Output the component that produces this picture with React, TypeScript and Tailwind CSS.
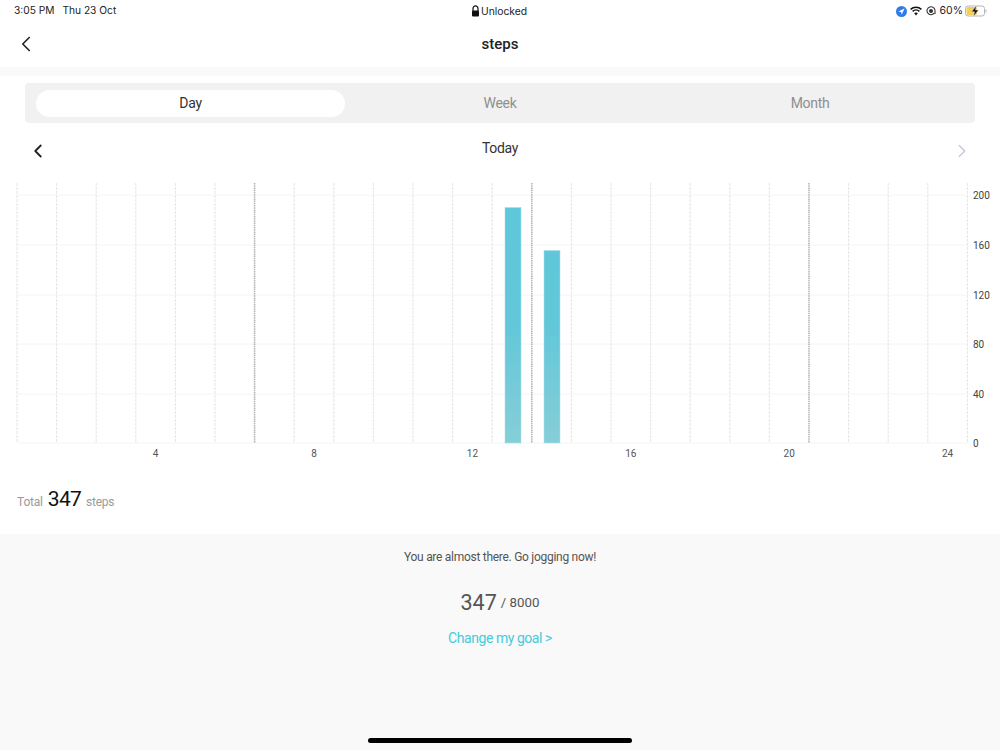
import { ChevronLeft, ChevronRight } from 'lucide-react'

const X0 = 17
const STEP = 39.6
const Y_TICKS = [
  { label: '200', y: 195 },
  { label: '160', y: 245 },
  { label: '120', y: 295 },
  { label: '80', y: 344 },
  { label: '40', y: 394 },
  { label: '0', y: 443 },
]
const X_TICKS = [4, 8, 12, 16, 20, 24]
const DARK_LINES = [6, 13, 20]
const BARS = [
  { x: 505, top: 207.5 },
  { x: 544, top: 250.5 },
]

function StepsChart() {
  return (
    <svg viewBox="0 0 1000 290" className="block h-[290px] w-full">
      <defs>
        <linearGradient id="bar-fill" gradientUnits="userSpaceOnUse" x1="0" x2="0" y1="34" y2="270">
          <stop offset="0%" stopColor="#5ec7da" />
          <stop offset="50%" stopColor="#62c7d9" />
          <stop offset="100%" stopColor="#86ced7" />
        </linearGradient>
      </defs>

      {/* horizontal grid */}
      {Y_TICKS.map((t) => (
        <line key={t.label} x1={X0} x2={968} y1={t.y - 173} y2={t.y - 173} stroke="#f4f4f4" strokeWidth={1} />
      ))}

      {/* vertical grid, a few drawn darker */}
      {Array.from({ length: 25 }).map((_, i) => {
        const x = X0 + i * STEP
        const dark = DARK_LINES.includes(i)
        return (
          <line
            key={i}
            x1={x}
            x2={x}
            y1={10}
            y2={270}
            stroke={dark ? '#b2b2b2' : '#e8e8e8'}
            strokeWidth={dark ? 1.5 : 1.2}
            strokeDasharray={dark ? '1.5 0.7' : '3 1'}
          />
        )
      })}

      {BARS.map((b) => (
        <rect
          key={b.x}
          x={b.x}
          y={b.top - 173}
          width={16}
          height={443 - b.top}
          fill="url(#bar-fill)"
          stroke="#a8e0ea"
          strokeWidth={0.5}
        />
      ))}

      {Y_TICKS.map((t) => (
        <text key={t.label} x={973} y={t.y - 169} fontSize="10" fill="#444" fontFamily="Roboto, sans-serif">
          {t.label}
        </text>
      ))}
      {X_TICKS.map((t) => (
        <text
          key={t}
          x={X0 + (t - 0.5) * STEP}
          y={283.5}
          textAnchor="middle"
          fontSize="10"
          fill="#555"
          fontFamily="Roboto, sans-serif"
        >
          {t}
        </text>
      ))}
    </svg>
  )
}

function StatusIcons() {
  return (
    <div className="flex items-center text-[10.5px] text-[#222]">
      <svg width="11" height="11" viewBox="0 0 11 11" className="mr-[3px]">
        <circle cx="5.5" cy="5.5" r="5.5" fill="#2f7bf0" />
        <path d="M8.6 2.4 L2.2 5.4 L5.1 5.9 L5.6 8.8 Z" fill="#fff" />
      </svg>
      <svg width="12" height="10" viewBox="0 0 12 10" className="mr-[4px]">
        <path d="M0.6 3.4a7.8 7.8 0 0 1 10.8 0" fill="none" stroke="#111" strokeWidth="1.5" />
        <path d="M2.6 5.4a5 5 0 0 1 6.8 0" fill="none" stroke="#111" strokeWidth="1.5" />
        <path d="M4.5 7.3a2.3 2.3 0 0 1 3 0L6 9.2z" fill="#111" stroke="#111" strokeWidth="0.5" />
      </svg>
      <svg width="10" height="10" viewBox="0 0 10 10" className="mr-[4px]">
        <path d="M8.2 7.2A4 4 0 1 1 9 5v3" fill="none" stroke="#333" strokeWidth="1.1" />
        <circle cx="5" cy="5" r="2" fill="#333" />
      </svg>
      <span className="mr-[2px]">60%</span>
      <svg width="22" height="12" viewBox="0 0 22 12">
        <rect x="0.5" y="1" width="19" height="10" rx="2.5" fill="#fff" stroke="#b5b5b5" />
        <rect x="1.5" y="2" width="10.5" height="8" rx="1.5" fill="#f5cf55" />
        <path d="M21 4.5v3" stroke="#b5b5b5" strokeWidth="1" />
        <path d="M11.5 0.5 L6.5 6.8 H9.5 L8.5 11.5 L13.5 5 H10.5 Z" fill="#111" stroke="#fff" strokeWidth="0.4" />
      </svg>
    </div>
  )
}

export default function App() {
  return (
    <div className="relative flex h-[750px] w-[1000px] flex-col overflow-hidden bg-white font-['Roboto',sans-serif]">
      {/* status bar */}
      <div className="relative flex h-[22px] shrink-0 items-center justify-between pl-[14px] pr-[13px] font-['Inter',sans-serif] text-[10.2px] text-[#222]">
        <div className="flex gap-[8px]">
          <span>3:05 PM</span>
          <span>Thu 23 Oct</span>
        </div>
        <div className="absolute left-[471px] top-[3px] flex items-center gap-[1px] text-[10.3px]">
          <svg width="9" height="12" viewBox="0 0 9 12">
            <path d="M2 6V3.4a2.5 2.5 0 0 1 5 0V6" fill="none" stroke="#111" strokeWidth="1.2" />
            <rect x="1" y="5.5" width="7" height="6" rx="1" fill="#111" />
          </svg>
          <span className="pt-[1px]">Unlocked</span>
        </div>
        <StatusIcons />
      </div>

      {/* title bar */}
      <div className="relative flex h-[45px] shrink-0 items-center justify-center">
        <ChevronLeft className="absolute left-[13px] top-[9px] text-[#222]" size={26} strokeWidth={1.5} />
        <span className="text-[15px] font-medium text-[#222]">steps</span>
      </div>
      <div className="h-[9px] shrink-0 bg-[#f9f9f9]" />

      {/* Day / Week / Month */}
      <div className="mx-[25px] mt-[7px] flex h-[40px] shrink-0 items-center rounded-[4px] bg-[#f1f1f1] pl-[11px] pr-[10px] text-[14px] tracking-[-0.3px] text-[#8f8f8f]">
        <div className="flex h-[27px] w-[309px] items-center justify-center rounded-full bg-white text-[#333]">Day</div>
        <div className="flex flex-1 justify-center">Week</div>
        <div className="flex w-[310px] justify-center">Month</div>
      </div>

      {/* date row */}
      <div className="relative h-[50px] shrink-0">
        <ChevronLeft className="absolute left-[27px] top-[17px] text-[#222]" size={22} strokeWidth={2} />
        <ChevronRight className="absolute right-[27px] top-[17px] text-[#c5c9d6]" size={22} strokeWidth={1.5} />
        <div className="pt-[15px] text-center text-[14px] leading-[20px] tracking-[-0.3px] text-[#333]">Today</div>
      </div>

      <StepsChart />

      {/* total */}
      <div className="flex h-[71px] shrink-0 items-start pl-[17px] pt-[23px]">
        <div className="flex items-baseline text-[#9a9a9a]">
          <span className="text-[12px] tracking-[-0.2px]">Total</span>
          <span className="mx-[5px] text-[21px] leading-[26px] tracking-[-0.7px] text-[#111]">347</span>
          <span className="text-[12px] tracking-[-0.3px]">steps</span>
        </div>
      </div>

      {/* goal panel */}
      <div className="flex flex-1 flex-col items-center bg-[#f9f9f9] pt-[15px]">
        <div className="text-[12px] leading-[16px] tracking-[-0.28px] text-[#555]">You are almost there. Go jogging now!</div>
        <div className="mt-[23px] flex items-center text-[#555]">
          <span className="text-[21.5px] leading-[30px]">347</span>
          <span className="ml-[4px] text-[13.3px]">/ 8000</span>
        </div>
        <div className="mt-[11px] text-[14px] leading-[18px] tracking-[-0.45px] text-[#45cbdc]">Change my goal &gt;</div>
      </div>

      {/* home indicator */}
      <div className="absolute bottom-[7px] left-[368px] h-[5px] w-[264px] rounded-full bg-black" />
    </div>
  )
}
